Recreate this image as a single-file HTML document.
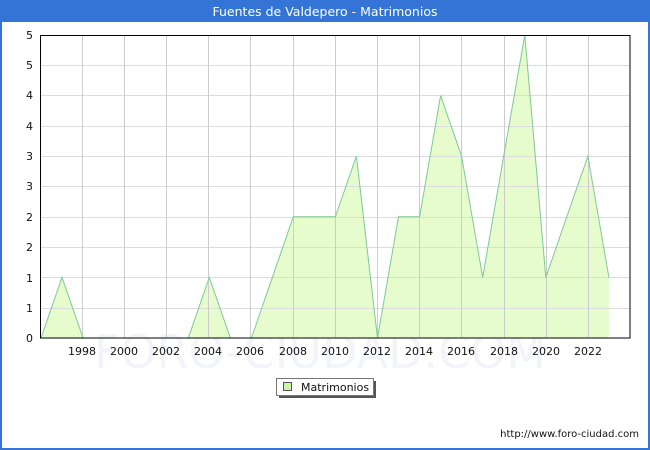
<!DOCTYPE html>
<html><head><meta charset="utf-8"><style>
html,body{margin:0;padding:0;background:#fff;}
body{width:650px;height:450px;overflow:hidden;position:relative;font-family:"DejaVu Sans","Liberation Sans",sans-serif;}
</style></head><body>
<svg width="650" height="450" xmlns="http://www.w3.org/2000/svg" style="position:absolute;left:0;top:0">
<rect x="0" y="0" width="650" height="450" fill="#fff"/>
<rect x="0" y="0" width="650" height="22" fill="#3474d6"/>
<rect x="0" y="0" width="2" height="450" fill="#3474d6"/>
<rect x="648" y="0" width="2" height="450" fill="#3474d6"/>
<rect x="0" y="448" width="650" height="2" fill="#3474d6"/>
<text x="325" y="16" font-size="12.5" fill="#fff" text-anchor="middle" font-family="DejaVu Sans,sans-serif">Fuentes de Valdepero - Matrimonios</text>
<text x="320" y="368" font-size="46" fill="#f3f4fa" text-anchor="middle" font-family="DejaVu Sans,sans-serif">FORO-CIUDAD.COM</text>
<polygon fill="#e6fccc" stroke="none" points="41,338 62,277.4 83.1,338 188.3,338 209.3,277.4 230.4,338 251.4,338 272.4,277.4 293.3,216.8 314.4,216.8 335.4,216.8 356.4,156.2 377.5,338 398.5,216.8 419.6,216.8 440.6,95.6 461.6,156.2 482.7,277.4 503.7,156.2 524.8,35 545.8,277.4 566.8,216.8 587.9,156.2 608.9,277.4 608.9,338"/>
<g stroke="#dcdcdc" stroke-width="1">
<line x1="41" y1="65.5" x2="630" y2="65.5"/><line x1="41" y1="95.5" x2="630" y2="95.5"/>
<line x1="41" y1="126.5" x2="630" y2="126.5"/><line x1="41" y1="156.5" x2="630" y2="156.5"/>
<line x1="41" y1="186.5" x2="630" y2="186.5"/><line x1="41" y1="217.5" x2="630" y2="217.5"/>
<line x1="41" y1="247.5" x2="630" y2="247.5"/><line x1="41" y1="277.5" x2="630" y2="277.5"/>
<line x1="41" y1="308.5" x2="630" y2="308.5"/>
</g>
<g stroke="#cccccc" stroke-width="1">
<line x1="82.5" y1="35" x2="82.5" y2="338"/><line x1="124.5" y1="35" x2="124.5" y2="338"/>
<line x1="166.5" y1="35" x2="166.5" y2="338"/><line x1="208.5" y1="35" x2="208.5" y2="338"/>
<line x1="250.5" y1="35" x2="250.5" y2="338"/><line x1="293.5" y1="35" x2="293.5" y2="338"/>
<line x1="335.5" y1="35" x2="335.5" y2="338"/><line x1="377.5" y1="35" x2="377.5" y2="338"/>
<line x1="419.5" y1="35" x2="419.5" y2="338"/><line x1="461.5" y1="35" x2="461.5" y2="338"/>
<line x1="504.5" y1="35" x2="504.5" y2="338"/><line x1="546.5" y1="35" x2="546.5" y2="338"/>
<line x1="588.5" y1="35" x2="588.5" y2="338"/>
</g>
<polyline fill="none" stroke="#7ec89a" stroke-width="1" points="41,338 62,277.4 83.1,338 188.3,338 209.3,277.4 230.4,338 251.4,338 272.4,277.4 293.3,216.8 314.4,216.8 335.4,216.8 356.4,156.2 377.5,338 398.5,216.8 419.6,216.8 440.6,95.6 461.6,156.2 482.7,277.4 503.7,156.2 524.8,35 545.8,277.4 566.8,216.8 587.9,156.2 608.9,277.4"/>
<rect x="40.5" y="35.5" width="589.5" height="302.5" fill="none" stroke="#000" stroke-width="1"/>
<g font-size="11" fill="#111" text-anchor="end" font-family="DejaVu Sans,sans-serif">
<text x="33" y="342">0</text><text x="33" y="312">1</text><text x="33" y="282">1</text>
<text x="33" y="251">2</text><text x="33" y="221">2</text><text x="33" y="190">3</text>
<text x="33" y="160">3</text><text x="33" y="130">4</text><text x="33" y="99">4</text>
<text x="33" y="69">5</text><text x="33" y="39">5</text>
</g>
<g font-size="11" fill="#111" text-anchor="middle" font-family="DejaVu Sans,sans-serif">
<text x="82" y="355">1998</text><text x="124" y="355">2000</text><text x="166" y="355">2002</text>
<text x="208" y="355">2004</text><text x="250" y="355">2006</text><text x="293" y="355">2008</text>
<text x="335" y="355">2010</text><text x="377" y="355">2012</text><text x="419" y="355">2014</text>
<text x="461" y="355">2016</text><text x="504" y="355">2018</text><text x="546" y="355">2020</text>
<text x="588" y="355">2022</text>
</g>
<rect x="279" y="381" width="97" height="17" fill="#555"/>
<rect x="276.5" y="378.5" width="97" height="17" fill="#fff" stroke="#777" stroke-width="1"/>
<rect x="283.5" y="382.5" width="8" height="8" fill="#ccf5a8" stroke="#555" stroke-width="1"/>
<text x="301" y="391" font-size="11" fill="#111" font-family="DejaVu Sans,sans-serif">Matrimonios</text>
<text x="639" y="437" font-size="10" fill="#111" text-anchor="end" font-family="DejaVu Sans,sans-serif">http://www.foro-ciudad.com</text>
</svg>
</body></html>
